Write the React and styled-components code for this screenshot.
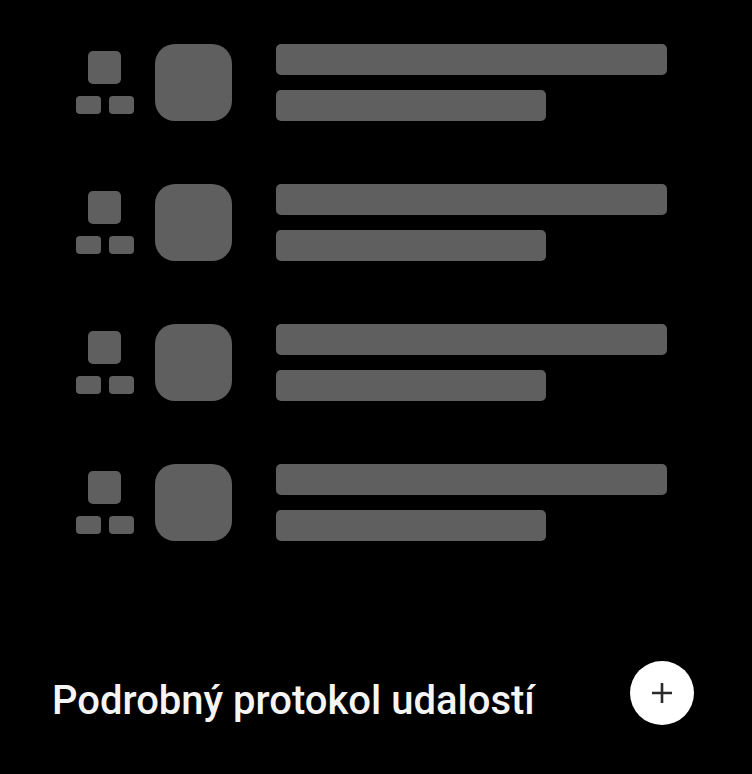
import React from "react";
import styled, { createGlobalStyle } from "styled-components";

const Global = createGlobalStyle`
  html, body { margin: 0; padding: 0; background: #000; }
  body { font-family: Roboto, "Noto Sans", sans-serif; }
`;

const Page = styled.div`
  width: 752px;
  height: 774px;
  background: #000;
  box-sizing: border-box;
  padding-top: 44px;
  display: flex;
  flex-direction: column;
`;

const List = styled.div`
  display: flex;
  flex-direction: column;
  gap: 63px;
  padding-left: 76px;
`;

const Row = styled.div`
  display: flex;
  align-items: center;
  height: 77px;
`;

const Cluster = styled.div`
  width: 57px;
  display: flex;
  flex-direction: column;
  align-items: center;
  gap: 12px;
`;

const Tile = styled.div`
  background: #5f5f5f;
  width: ${(p) => p.$w}px;
  height: ${(p) => p.$h}px;
  border-radius: ${(p) => p.$r}px;
`;

const TileRow = styled.div`
  display: flex;
  gap: 8px;
`;

const Avatar = styled.div`
  width: 77px;
  height: 77px;
  border-radius: 20px;
  background: #5f5f5f;
  margin-left: 22px;
`;

const Lines = styled.div`
  display: flex;
  flex-direction: column;
  gap: 15px;
  margin-left: 44px;
`;

const Bar = styled.div`
  width: ${(p) => p.$w}px;
  height: 31px;
  border-radius: 5px;
  background: #5f5f5f;
`;

const Footer = styled.div`
  margin-top: auto;
  margin-bottom: 49px;
  display: flex;
  align-items: center;
  justify-content: space-between;
  padding: 0 58px 0 52px;
`;

const Title = styled.div`
  color: #f5f5f5;
  font-family: Roboto, sans-serif;
  font-size: 40px;
  font-weight: 500;
  line-height: 48px;
  margin-top: 16px;
`;

const AddButton = styled.button`
  width: 64px;
  height: 64px;
  border-radius: 50%;
  border: none;
  background: #fff;
  display: flex;
  align-items: center;
  justify-content: center;
  padding: 0;
`;

const rows = [0, 1, 2, 3];

export default function App() {
  return (
    <>
      <Global />
      <Page>
        <List>
          {rows.map((i) => (
            <Row key={i}>
              <Cluster>
                <Tile $w={33} $h={33} $r={5} />
                <TileRow>
                  <Tile $w={25} $h={18} $r={4} />
                  <Tile $w={25} $h={18} $r={4} />
                </TileRow>
              </Cluster>
              <Avatar />
              <Lines>
                <Bar $w={391} />
                <Bar $w={270} />
              </Lines>
            </Row>
          ))}
        </List>
        <Footer>
          <Title>Podrobný protokol udalostí</Title>
          <AddButton aria-label="Přidat">
            <svg width="22" height="22" viewBox="0 0 22 22">
              <path d="M11 1v20M1 11h20" stroke="#2a2a2a" strokeWidth="2.6" fill="none" />
            </svg>
          </AddButton>
        </Footer>
      </Page>
    </>
  );
}
